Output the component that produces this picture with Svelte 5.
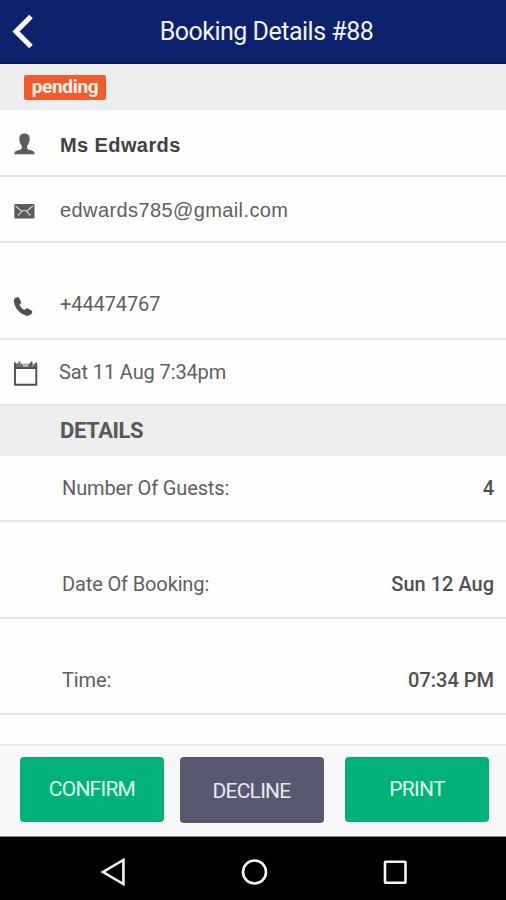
<script lang="ts">
  interface Contact {
    icon: string;
    value: string;
    className?: string;
  }

  interface Detail {
    label: string;
    value: string;
    className: string;
  }

  const contacts: Contact[] = [
    { icon: "user", value: "Ms Edwards", className: "name" },
    { icon: "mail", value: "edwards785@gmail.com", className: "email" },
    { icon: "phone", value: "+44474767", className: "phone" },
    { icon: "calendar", value: "Sat 11 Aug 7:34pm", className: "created" },
  ];

  const details: Detail[] = [
    { label: "Number Of Guests:", value: "4", className: "guests" },
    { label: "Date Of Booking:", value: "Sun 12 Aug", className: "date" },
    { label: "Time:", value: "07:34 PM", className: "time" },
  ];
</script>

<div class="screen">
  <header>
    <button class="back" aria-label="Back">
      <svg width="24" height="40" viewBox="0 0 24 40">
        <path d="M20 5.500 L5 20.500 L20 35.500" fill="none" stroke="#fff" stroke-width="5" />
      </svg>
    </button>
    <h1>Booking Details #88</h1>
  </header>

  <div class="status"><span class="badge">pending</span></div>

  {#each contacts as { icon, value, className }}
    <div class="contact {className}">
      <svg width="28" height="28" viewBox="0 0 28 28">
        {#if icon === "user"}
          <path fill="#5c5c5c" d="M14.500 2.500c-3.800 0-5.400 2.300-5.200 5.600.1 3 1.100 5.200 2.500 6.700v2.700c0 .8-1.800 1.300-3.600 1.800-2.500.7-3.900 1.500-3.900 4h20.400c0-2.500-1.400-3.300-3.900-4-1.800-.5-3.600-1-3.600-1.800v-2.700c1.400-1.500 2.400-3.700 2.500-6.700.2-3.300-1.400-5.600-5.200-5.600z" />
        {:else if icon === "mail"}
          <rect x="4.300" y="7" width="20.200" height="14.500" rx="1" fill="#5c5c5c" />
          <path d="M5.500 9l6.200 5.300 2.500-1 2.500 1 6.200-5.300M8 18.500l3.700-4.200M20.500 18.500l-3.800-4.200" fill="none" stroke="#cfcfcf" stroke-width="1.200" />
        {:else if icon === "phone"}
          <path fill="#505050" d="M5 5.200l1.800-.9c1-.4 2 0 2.400.9l1.700 3.600c.4.900.2 1.600-.5 2.200l-1 .8c1 2.200 2.700 4 5 5.200l1.200-1.100c.7-.6 1.400-.7 2.200-.3l3.600 1.900c1 .5 1.200 1.400.7 2.300-1.300 2.300-3.600 3.400-6.300 2.600C9.800 20.600 4.700 15 4 9c-.2-1.600 0-2.900 1-3.800z" />
        {:else}
          <path d="M5 3.500h21v5H5z" fill="#b0b0b0" />
          <path d="M4.500 8h22" stroke="#505050" stroke-width="2" />
          <path d="M6 3.500h2l1.500 3.500h-3zM11.500 3.500L10 7h3.500zM19 3.500h2l1 3.500h-4zM25 3.500L22.500 7h3z" fill="#606060" />
          <path d="M9.500 1.500v4M21.500 1.500v4" stroke="#505050" stroke-width="1.800" />
          <path d="M5 2.500v22.300h21.300V2.500" fill="none" stroke="#505050" stroke-width="1.900" />
        {/if}
      </svg>
      <span>{value}</span>
    </div>
  {/each}

  <h2>DETAILS</h2>

  {#each details as { label, value, className }}
    <div class="detail {className}">
      <span>{label}</span>
      <strong>{value}</strong>
    </div>
  {/each}

  <footer>
    <button>CONFIRM</button>
    <button class="decline">DECLINE</button>
    <button>PRINT</button>
  </footer>

  <nav>
    <svg width="30" height="32" viewBox="0 0 30 32">
      <path d="M25.400 4v24L5 16z" />
    </svg>
    <svg width="30" height="32" viewBox="0 0 30 32">
      <circle cx="15.500" cy="16" r="11.500" />
    </svg>
    <svg width="30" height="32" viewBox="0 0 30 32">
      <rect x="5" y="5.700" width="20.500" height="21" rx="0.500" />
    </svg>
  </nav>
</div>

<style>
  .screen {
    box-sizing: border-box;
    width: 506px;
    height: 900px;
    display: flex;
    flex-direction: column;
    overflow: hidden;
    background: #fefefe;
    color: #606060;
    font-family: Roboto, sans-serif;
    font-size: 20px;
  }

  button {
    border: 0;
    padding: 0;
    font-family: inherit;
    cursor: pointer;
  }

  header {
    box-sizing: border-box;
    height: 64px;
    flex: none;
    display: grid;
    grid-template-columns: 44px 1fr 17px;
    align-items: center;
    background: #0d226c;
    border-bottom: 2px solid #0b1659;
    color: #f1f4fb;
  }

  .back {
    height: 40px;
    padding-left: 11px;
    background: none;
    text-align: left;
  }

  h1 {
    margin: 0;
    padding-top: 1px;
    text-align: center;
    font-size: 25px;
    font-weight: 400;
    line-height: 30px;
    letter-spacing: -0.5px;
  }

  .status {
    box-sizing: border-box;
    height: 46px;
    flex: none;
    padding: 11px 24px;
    background: #eee;
  }

  .badge {
    display: block;
    width: 82px;
    height: 25px;
    border-radius: 2px;
    background: #f55a2c;
    color: #fff5ef;
    text-align: center;
    font-size: 19px;
    font-weight: 700;
    line-height: 23px;
    letter-spacing: -0.3px;
  }

  .contact,
  .detail {
    box-sizing: border-box;
    height: 66px;
    flex: none;
    display: flex;
    align-items: center;
    border-bottom: 2px solid #e6e6e6;
  }

  .contact {
    padding-left: 10px;
    gap: 22px;
  }

  .contact svg {
    flex: none;
  }

  .contact.name {
    height: 67px;
    padding-top: 5px;
    color: #424242;
    font-family: "Liberation Sans", sans-serif;
    font-weight: 700;
    letter-spacing: 0.4px;
  }

  .contact.email {
    padding-top: 3px;
    font-family: "Liberation Sans", sans-serif;
    letter-spacing: 0.4px;
  }

  .contact.phone {
    height: 97px;
    padding-top: 27px;
    letter-spacing: -0.1px;
  }

  .contact.phone svg {
    margin-top: 5px;
  }

  .contact.created {
    padding-top: 0;
    gap: 21px;
    letter-spacing: -0.12px;
  }

  .contact.created svg {
    margin-top: 3px;
  }

  h2 {
    box-sizing: border-box;
    height: 50px;
    flex: none;
    margin: 0;
    padding-left: 60px;
    background: #eee;
    color: #585858;
    font-size: 22px;
    font-weight: 700;
    line-height: 50px;
    letter-spacing: -0.4px;
  }

  .detail {
    justify-content: space-between;
    padding: 0 12px 0 62px;
    letter-spacing: -0.13px;
  }

  .detail strong {
    color: #505050;
    font-weight: 500;
    letter-spacing: 0;
  }

  .detail.date {
    height: 97px;
    padding-top: 28px;
  }

  .detail.time {
    height: 96px;
    padding-top: 28px;
  }

  footer {
    box-sizing: border-box;
    height: 93px;
    flex: none;
    display: flex;
    margin-top: auto;
    padding: 11px 17px 0 20px;
    justify-content: space-between;
    background: #f8f8f8;
    border-top: 2px solid #e9e9e9;
    border-bottom: 1px solid #888;
  }

  footer button {
    width: 144px;
    height: 65px;
    padding-bottom: 2px;
    border-radius: 4px;
    background: #00b27a;
    color: #e0fff4;
    font-size: 21px;
    letter-spacing: -0.75px;
  }

  footer .decline {
    height: 66px;
    margin-right: 5px;
    padding: 2px 1px 0 0;
    background: #58586e;
    color: #e8e8f5;
  }

  nav {
    height: 63px;
    flex: none;
    display: flex;
    justify-content: space-between;
    align-items: center;
    box-sizing: border-box;
    padding: 7px 96px 0 98px;
    background: #000;
  }

  nav svg {
    fill: none;
    stroke: #f4f4f4;
    stroke-width: 2.600;
  }
</style>
